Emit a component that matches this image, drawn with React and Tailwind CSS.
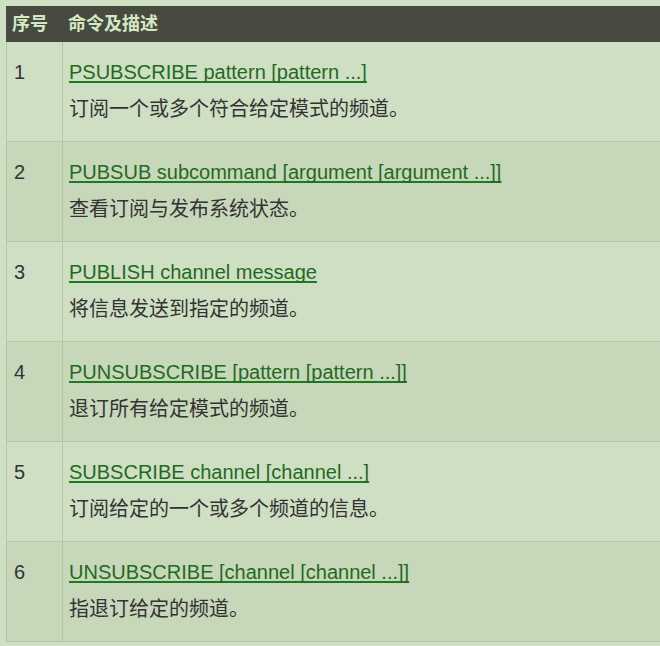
const rows = [
  { n: 1, cmd: "PSUBSCRIBE pattern [pattern ...]", desc: "订阅一个或多个符合给定模式的频道。" },
  { n: 2, cmd: "PUBSUB subcommand [argument [argument ...]]", desc: "查看订阅与发布系统状态。" },
  { n: 3, cmd: "PUBLISH channel message", desc: "将信息发送到指定的频道。" },
  { n: 4, cmd: "PUNSUBSCRIBE [pattern [pattern ...]]", desc: "退订所有给定模式的频道。" },
  { n: 5, cmd: "SUBSCRIBE channel [channel ...]", desc: "订阅给定的一个或多个频道的信息。" },
  { n: 6, cmd: "UNSUBSCRIBE [channel [channel ...]]", desc: "指退订给定的频道。" },
];

const font = "font-['Liberation_Sans','Noto_Sans_CJK_SC',sans-serif]";

export default function App() {
  return (
    <div className={`h-[646px] w-full overflow-hidden bg-[#cfdfc4] pl-[6px] pt-[6px] ${font}`}>
      <table className="w-[720px] border-collapse border border-[#b5c6a8]">
        <thead>
          <tr className="bg-[#464a3f] text-[#d5e8c6]">
            <th className="h-[35px] w-[56px] border border-[#464a3f] px-[5px] text-left text-[18px] font-bold">序号</th>
            <th className="h-[35px] border border-[#464a3f] px-[5px] text-left text-[18px] font-bold">命令及描述</th>
          </tr>
        </thead>
        <tbody>
          {rows.map((r) => (
            <tr key={r.n} className={r.n % 2 === 0 ? "bg-[#c7d7ba]" : "bg-[#cfdfc4]"}>
              <td className="h-[100px] border border-[#b5c6a8] px-[7px] pb-[14px] pt-[12px] align-top text-[20px] leading-[36px] text-[#333]">
                {r.n}
              </td>
              <td className="border border-[#b5c6a8] px-[6px] pb-[14px] pt-[12px] align-top text-[20px] leading-[36px]">
                <a
                  href="#"
                  className="text-[#1f6a1f] underline decoration-[#1f7a1f] underline-offset-2 [text-decoration-skip-ink:none]"
                >
                  {r.cmd}
                </a>
                <div className="mt-[1px] text-[#333]">{r.desc}</div>
              </td>
            </tr>
          ))}
        </tbody>
      </table>
    </div>
  );
}
